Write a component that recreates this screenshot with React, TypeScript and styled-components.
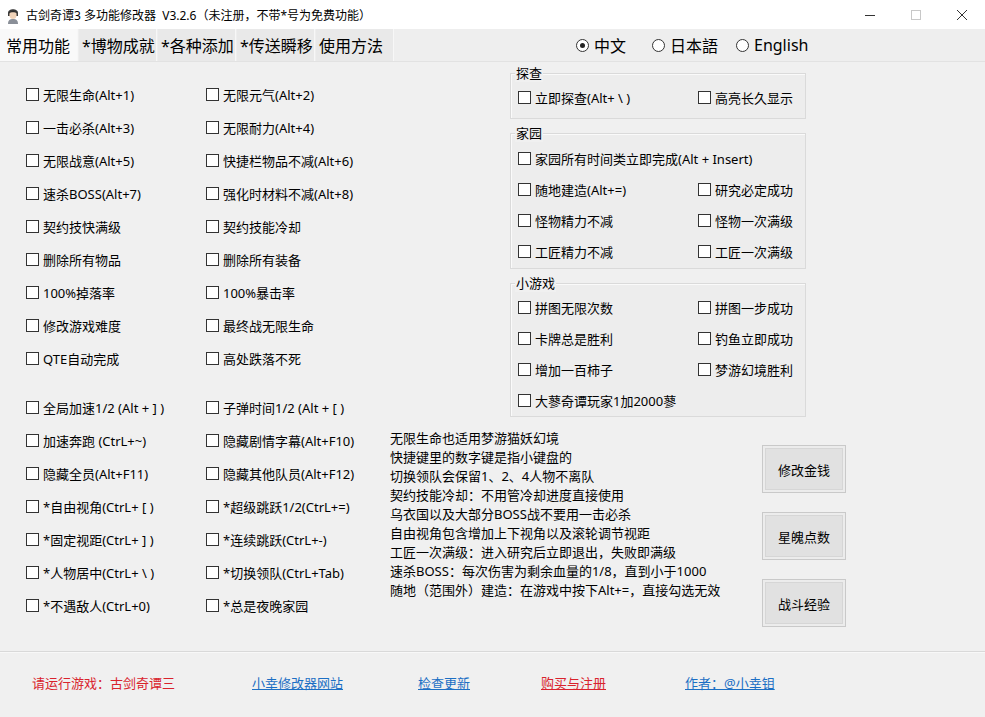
import React from "react";
import styled, { createGlobalStyle } from "styled-components";

const GlobalStyle = createGlobalStyle`
  html, body {
    margin: 0;
    padding: 0;
    background: #f0f0f0;
  }
  body {
    font-family: "Noto Sans", "Noto Sans CJK SC", sans-serif;
    font-size: 13px;
    color: #000;
  }
`;

const Window = styled.div`
  width: 985px;
  height: 717px;
  display: flex;
  flex-direction: column;
  background: #f0f0f0;
  overflow: hidden;
`;

const TitleBar = styled.div`
  height: 29px;
  background: #fff;
  display: flex;
  align-items: center;
  padding-left: 5px;
  font-size: 12px;
`;

const TitleText = styled.span`
  margin-left: 5px;
  white-space: pre;
  flex: 1;
`;

const WinButton = styled.div`
  width: 46px;
  height: 29px;
  display: flex;
  align-items: center;
  justify-content: center;
`;

const TabBar = styled.div`
  height: 33px;
  display: flex;
  align-items: stretch;
  background: #eeeeee;
  border-bottom: 1px solid #e2e2e2;
  box-sizing: border-box;
`;

const Tab = styled.div<{ $active?: boolean }>`
  width: 78px;
  margin-right: 1px;
  padding-left: ${(p) => (p.$active ? 6 : 3)}px;
  box-sizing: border-box;
  display: flex;
  align-items: center;
  font-size: 16px;
  white-space: nowrap;
  background: ${(p) => (p.$active ? "#f9f9f9" : "#e9e9e9")};
  border-right: 1px solid #f7f7f7;
`;

const RadioGroup = styled.div`
  display: flex;
  align-items: center;
  margin-left: 181px;
`;

const RadioItem = styled.label<{ $w: number }>`
  width: ${(p) => p.$w}px;
  display: flex;
  align-items: center;
  gap: 5px;
  font-size: 16px;
`;

const RadioCircle = styled.span<{ $on?: boolean }>`
  width: 11px;
  height: 11px;
  border: 1px solid #333;
  border-radius: 50%;
  background: #fff;
  display: flex;
  align-items: center;
  justify-content: center;
  &::after {
    content: "";
    width: 5px;
    height: 5px;
    border-radius: 50%;
    background: ${(p) => (p.$on ? "#222" : "transparent")};
  }
`;

const Body = styled.div`
  flex: 1;
  display: flex;
  padding-left: 26px;
`;

const LeftPane = styled.div`
  width: 364px;
  padding-top: 16px;
`;

const CheckGrid = styled.div<{ $mt?: number }>`
  display: grid;
  grid-template-columns: 180px 180px;
  grid-auto-rows: 33px;
  margin-top: ${(p) => p.$mt ?? 0}px;
`;

const Check = styled.label<{ $span?: boolean }>`
  display: flex;
  align-items: center;
  gap: 4px;
  white-space: pre;
  grid-column: ${(p) => (p.$span ? "1 / 3" : "auto")};
`;

const Box = styled.span`
  width: 11px;
  height: 11px;
  border: 1px solid #333;
  background: #fff;
  flex-shrink: 0;
`;

const RightPane = styled.div`
  flex: 1;
  display: flex;
  flex-direction: column;
  padding-top: 2px;
`;

const Groups = styled.div`
  margin-left: 120px;
  width: 296px;
  display: flex;
  flex-direction: column;
  gap: 5px;
`;

const Group = styled.fieldset<{ $pt: number; $pb: number }>`
  margin: 0;
  padding: ${(p) => p.$pt}px 0 ${(p) => p.$pb}px 7px;
  border: 1px solid #dadada;
  box-shadow: inset 1px 1px 0 #fafafa;
  background: #ededed;
  min-width: 0;
`;

const Legend = styled.legend`
  padding: 0 1px;
  margin-left: -3px;
  line-height: 18px;
  font-size: 13px;
  background: #f0f0f0;
`;

const GroupGrid = styled.div`
  display: grid;
  grid-template-columns: 180px 1fr;
  grid-auto-rows: 31px;
`;

const LowerRow = styled.div`
  display: flex;
  margin-top: 12px;
`;

const Notes = styled.div`
  width: 372px;
  line-height: 19px;
  white-space: pre;
`;

const ButtonCol = styled.div`
  display: flex;
  flex-direction: column;
  gap: 19px;
  padding-top: 16px;
`;

const ActionButton = styled.button`
  width: 84px;
  height: 48px;
  font-family: inherit;
  font-size: 13px;
  color: #000;
  background: #e1e1e1;
  border: 1px solid #c9c9c9;
  box-shadow: inset 0 0 0 2px #ececec, inset 0 0 0 3px #d6d6d6;
  padding: 0;
`;

const Footer = styled.div`
  height: 66px;
  border-top: 1px solid #d9d9d9;
  box-shadow: inset 0 1px 0 #f8f8f8;
  box-sizing: border-box;
  display: flex;
  align-items: center;
  padding-left: 32px;
  padding-bottom: 4px;
`;

const FooterItem = styled.span<{ $w: number; $color: string; $link?: boolean }>`
  width: ${(p) => p.$w}px;
  flex-shrink: 0;
  white-space: nowrap;
  span {
    color: ${(p) => p.$color};
    text-decoration: ${(p) => (p.$link ? "underline" : "none")};
  }
`;

const leftA: string[][] = [
  ["无限生命(Alt+1)", "无限元气(Alt+2)"],
  ["一击必杀(Alt+3)", "无限耐力(Alt+4)"],
  ["无限战意(Alt+5)", "快捷栏物品不减(Alt+6)"],
  ["速杀BOSS(Alt+7)", "强化时材料不减(Alt+8)"],
  ["契约技快满级", "契约技能冷却"],
  ["删除所有物品", "删除所有装备"],
  ["100%掉落率", "100%暴击率"],
  ["修改游戏难度", "最终战无限生命"],
  ["QTE自动完成", "高处跌落不死"],
];

const leftB: string[][] = [
  ["全局加速1/2 (Alt + ] )", "子弹时间1/2 (Alt + [ )"],
  ["加速奔跑 (CtrL+~)", "隐藏剧情字幕(Alt+F10)"],
  ["隐藏全员(Alt+F11)", "隐藏其他队员(Alt+F12)"],
  ["*自由视角(CtrL+ [ )", "*超级跳跃1/2(CtrL+=)"],
  ["*固定视距(CtrL+ ] )", "*连续跳跃(CtrL+-)"],
  ["*人物居中(CtrL+ \\ )", "*切换领队(CtrL+Tab)"],
  ["*不遇敌人(CtrL+0)", "*总是夜晚家园"],
];

type GroupDef = { title: string; pt: number; pb: number; items: string[][] };

const groups: GroupDef[] = [
  { title: "探查", pt: 0, pb: 5, items: [["立即探查(Alt+ \\ )", "高亮长久显示"]] },
  {
    title: "家园",
    pt: 1,
    pb: 1,
    items: [
      ["家园所有时间类立即完成(Alt + Insert)"],
      ["随地建造(Alt+=)", "研究必定成功"],
      ["怪物精力不减", "怪物一次满级"],
      ["工匠精力不减", "工匠一次满级"],
    ],
  },
  {
    title: "小游戏",
    pt: 0,
    pb: 0,
    items: [
      ["拼图无限次数", "拼图一步成功"],
      ["卡牌总是胜利", "钓鱼立即成功"],
      ["增加一百柿子", "梦游幻境胜利"],
      ["大蓼奇谭玩家1加2000蓼"],
    ],
  },
];

const notes = [
  "无限生命也适用梦游猫妖幻境",
  "快捷键里的数字键是指小键盘的",
  "切换领队会保留1、2、4人物不离队",
  "契约技能冷却：不用管冷却进度直接使用",
  "乌衣国以及大部分BOSS战不要用一击必杀",
  "自由视角包含增加上下视角以及滚轮调节视距",
  "工匠一次满级：进入研究后立即退出，失败即满级",
  "速杀BOSS：每次伤害为剩余血量的1/8，直到小于1000",
  "随地（范围外）建造：在游戏中按下Alt+=，直接勾选无效",
];

const CheckRows = ({ rows }: { rows: string[][] }) => (
  <>
    {rows.flatMap((row, i) =>
      row.map((label, j) => (
        <Check key={`${i}-${j}`} $span={row.length === 1}>
          <Box />
          {label}
        </Check>
      ))
    )}
  </>
);

const AppIcon = () => (
  <svg width="16" height="18" viewBox="0 0 16 18">
    <path d="M3 7 C3 2 13 2 13 7 L13 10 L3 10 Z" fill="#3a3a3a" />
    <ellipse cx="8" cy="9" rx="3.6" ry="4" fill="#f1d3b8" />
    <path d="M4 7 C5 4 11 4 12 7 C10 6 6 6 4 7 Z" fill="#2a2a2a" />
    <path d="M3 18 C3 14 5 13 8 13 C11 13 13 14 13 18 Z" fill="#8a8f98" />
  </svg>
);

export default function App() {
  return (
    <Window>
      <GlobalStyle />
      <TitleBar>
        <AppIcon />
        <TitleText>古剑奇谭3 多功能修改器  V3.2.6（未注册，不带*号为免费功能）</TitleText>
        <WinButton>
          <svg width="10" height="10" viewBox="0 0 10 10">
            <path d="M0 5.5 H10" stroke="#333" strokeWidth="1" />
          </svg>
        </WinButton>
        <WinButton>
          <svg width="10" height="10" viewBox="0 0 10 10">
            <rect x="0.5" y="0.5" width="9" height="9" fill="none" stroke="#c8c8c8" strokeWidth="1" />
          </svg>
        </WinButton>
        <WinButton>
          <svg width="10" height="10" viewBox="0 0 10 10">
            <path d="M0 0 L10 10 M10 0 L0 10" stroke="#333" strokeWidth="1" />
          </svg>
        </WinButton>
      </TitleBar>

      <TabBar>
        <Tab $active>常用功能</Tab>
        <Tab>*博物成就</Tab>
        <Tab>*各种添加</Tab>
        <Tab>*传送瞬移</Tab>
        <Tab>使用方法</Tab>
        <RadioGroup>
          <RadioItem $w={76}>
            <RadioCircle $on />
            中文
          </RadioItem>
          <RadioItem $w={84}>
            <RadioCircle />
            日本語
          </RadioItem>
          <RadioItem $w={80}>
            <RadioCircle />
            English
          </RadioItem>
        </RadioGroup>
      </TabBar>

      <Body>
        <LeftPane>
          <CheckGrid>
            <CheckRows rows={leftA} />
          </CheckGrid>
          <CheckGrid $mt={16}>
            <CheckRows rows={leftB} />
          </CheckGrid>
        </LeftPane>

        <RightPane>
          <Groups>
            {groups.map((g) => (
              <Group key={g.title} $pt={g.pt} $pb={g.pb}>
                <Legend>{g.title}</Legend>
                <GroupGrid>
                  <CheckRows rows={g.items} />
                </GroupGrid>
              </Group>
            ))}
          </Groups>
          <LowerRow>
            <Notes>{notes.join("\n")}</Notes>
            <ButtonCol>
              <ActionButton>修改金钱</ActionButton>
              <ActionButton>星魄点数</ActionButton>
              <ActionButton>战斗经验</ActionButton>
            </ButtonCol>
          </LowerRow>
        </RightPane>
      </Body>

      <Footer>
        <FooterItem $w={220} $color="#d9232d">
          <span>请运行游戏：古剑奇谭三</span>
        </FooterItem>
        <FooterItem $w={166} $color="#1c6fc4" $link>
          <span>小幸修改器网站</span>
        </FooterItem>
        <FooterItem $w={123} $color="#1c6fc4" $link>
          <span>检查更新</span>
        </FooterItem>
        <FooterItem $w={144} $color="#d9232d" $link>
          <span>购买与注册</span>
        </FooterItem>
        <FooterItem $w={140} $color="#1c6fc4" $link>
          <span>作者：@小幸钼</span>
        </FooterItem>
      </Footer>
    </Window>
  );
}
